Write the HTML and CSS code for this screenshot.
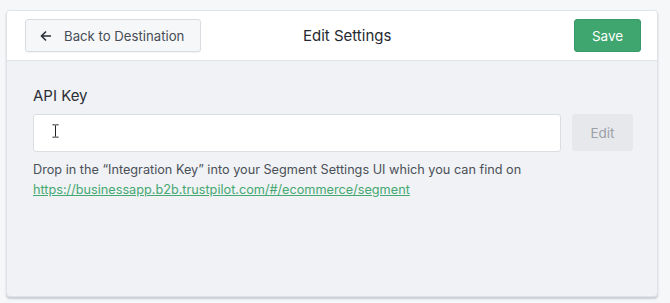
FILE: index.html
```html
<!DOCTYPE html>
<html>
<head>
<meta charset="utf-8">
<link rel="stylesheet" href="styles.css">
</head>
<body>
<div class="page">
  <div class="panel">
    <div class="header">
      <button class="btn back">
        <svg class="arrow" width="12" height="12" viewBox="0 0 12 12"><path d="M11 6H1.5M6 1.5L1.5 6L6 10.5" fill="none" stroke="#2b2f36" stroke-width="1.6"/></svg>
        <span>Back to Destination</span>
      </button>
      <div class="title">Edit Settings</div>
      <button class="btn save">Save</button>
    </div>
    <div class="body">
      <label class="label">API Key</label>
      <div class="row">
        <div class="input">
          <svg class="ibeam" width="7" height="14" viewBox="0 0 7 14"><path d="M0.5 0.8h2M4.5 0.8h2M3.5 1.5v11M0.5 13.2h2M4.5 13.2h2M2.5 1h2M2.5 13h2" fill="none" stroke="#222" stroke-width="1"/></svg>
        </div>
        <button class="btn edit">Edit</button>
      </div>
      <p class="help">Drop in the “Integration Key” into your Segment Settings UI which you can find on<br><a href="#">https://businessapp.b2b.trustpilot.com/#/ecommerce/segment</a></p>
    </div>
  </div>
</div>
</body>
</html>
```
FILE: styles.css
```css
* { box-sizing: border-box; }
html, body { margin: 0; padding: 0; }
body {
  background: #f6f7f9;
  font-family: Inter, "Noto Sans", sans-serif;
  color: #2b2f36;
  width: 670px;
  height: 303px;
  overflow: hidden;
}
.page {
  padding: 10px 12px 0 6px;
}
.panel {
  width: 652px;
  height: 287px;
  border: 1px solid #dfe2e6;
  border-radius: 4px;
  background: #f0f2f5;
  box-shadow: 0 2px 2px rgba(120, 130, 150, 0.35);
  overflow: hidden;
}
.header {
  height: 50px;
  background: #fff;
  border-bottom: 1px solid #e1e4e8;
  display: flex;
  align-items: center;
  padding: 0 16px 0 18px;
}
.btn {
  font-family: inherit;
  border-radius: 3px;
  cursor: pointer;
}
.back {
  width: 176px;
  height: 33px;
  display: flex;
  align-items: center;
  gap: 12px;
  padding: 0 0 0 14px;
  background: #f6f7f9;
  border: 1px solid #d9dde2;
  font-size: 13.2px;
  color: #474d56;
  box-shadow: 0 1px 1px rgba(0,0,0,0.05);
}
.arrow { display: block; }
.title {
  font-size: 15px;
  color: #252930;
  margin-left: 102px;
}
.save {
  margin-left: auto;
  width: 67px;
  height: 33px;
  background: #3ea66e;
  border: 1px solid #38996a;
  color: #fff;
  font-size: 13.5px;
}
.body {
  padding: 25px 24px 0 26px;
}
.label {
  display: block;
  font-size: 15px;
  color: #2b2f36;
  line-height: 20px;
  margin-bottom: 8px;
}
.row {
  display: flex;
  gap: 11px;
  align-items: flex-start;
}
.input {
  width: 528px;
  height: 38px;
  background: #fff;
  border: 1px solid #dadde2;
  border-radius: 3px;
  padding: 9px 0 0 18px;
}
.ibeam { display: block; }
.edit {
  width: 61px;
  height: 37px;
  background: #e6e8eb;
  border: none;
  color: #9ca1a8;
  font-size: 13.5px;
}
.help {
  margin: 8px 0 0;
  font-size: 12.7px;
  line-height: 20px;
  color: #4b5058;
}
.help a {
  color: #45a872;
  text-decoration: underline;
}
```
